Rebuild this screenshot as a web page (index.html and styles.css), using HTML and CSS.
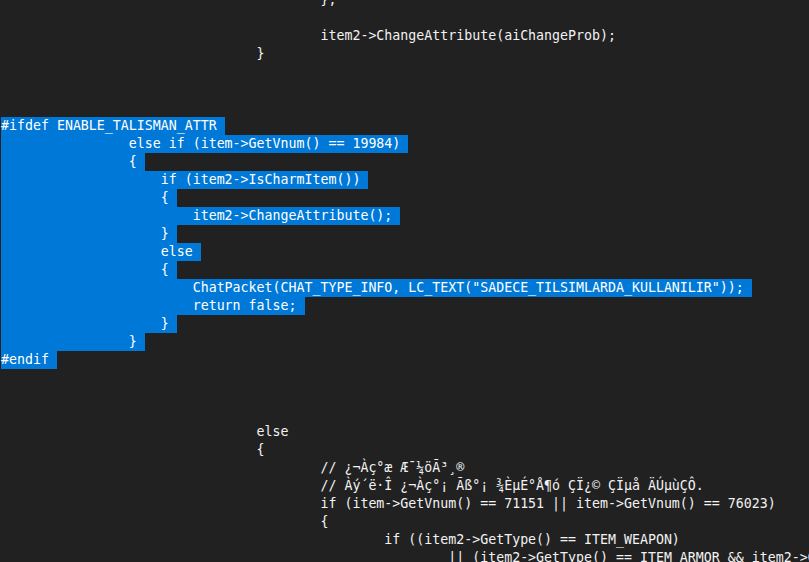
FILE: index.html
```html
<!DOCTYPE html>
<html lang="tr">
<head>
<meta charset="utf-8">
<title>Code</title>
<link rel="stylesheet" href="styles.css">
</head>
<body>
<div class="editor">
<div class="line">                                        };</div>
<div class="line"></div>
<div class="line">                                        item2-&gt;ChangeAttribute(aiChangeProb);</div>
<div class="line">                                }</div>
<div class="line"></div>
<div class="line"></div>
<div class="line"></div>
<div class="line"><span class="sel">#ifdef ENABLE_TALISMAN_ATTR </span></div>
<div class="line"><span class="sel">                else if (item-&gt;GetVnum() == 19984) </span></div>
<div class="line"><span class="sel">                { </span></div>
<div class="line"><span class="sel">                    if (item2-&gt;IsCharmItem()) </span></div>
<div class="line"><span class="sel">                    { </span></div>
<div class="line"><span class="sel">                        item2-&gt;ChangeAttribute(); </span></div>
<div class="line"><span class="sel">                    } </span></div>
<div class="line"><span class="sel">                    else </span></div>
<div class="line"><span class="sel">                    { </span></div>
<div class="line"><span class="sel">                        ChatPacket(CHAT_TYPE_INFO, LC_TEXT("SADECE_TILSIMLARDA_KULLANILIR")); </span></div>
<div class="line"><span class="sel">                        return false; </span></div>
<div class="line"><span class="sel">                    } </span></div>
<div class="line"><span class="sel">                } </span></div>
<div class="line"><span class="sel">#endif </span></div>
<div class="line"></div>
<div class="line"></div>
<div class="line"></div>
<div class="line">                                else</div>
<div class="line">                                {</div>
<div class="line">                                        // ¿¬Àç°æ Æ¯¼öÃ³¸®</div>
<div class="line">                                        // Àý´ë·Î ¿¬Àç°¡ Ãß°¡ ¾ÈµÉ°Å¶ó ÇÏ¿© ÇÏµå ÄÚµùÇÔ.</div>
<div class="line">                                        if (item-&gt;GetVnum() == 71151 || item-&gt;GetVnum() == 76023)</div>
<div class="line">                                        {</div>
<div class="line">                                                if ((item2-&gt;GetType() == ITEM_WEAPON)</div>
<div class="line">                                                        || (item2-&gt;GetType() == ITEM_ARMOR &amp;&amp; item2-&gt;GetSubType() == ARMOR_BODY))</div>
</div>
</body>
</html>
```

FILE: styles.css
```css
html, body {
  margin: 0;
  padding: 0;
  background: #212121;
  overflow: hidden;
  height: 100%;
}

.editor {
  margin-top: -9px;
  padding-left: 1px;
  font-family: "DejaVu Sans Mono", "Liberation Mono", monospace;
  font-size: 13.28px;
  color: #f2f2f2;
}

.line {
  height: 18px;
  line-height: 18px;
  white-space: pre;
}

.sel {
  background: #0078d7;
  color: #ffffff;
  display: inline-block;
  height: 18px;
  vertical-align: top;
}
```
